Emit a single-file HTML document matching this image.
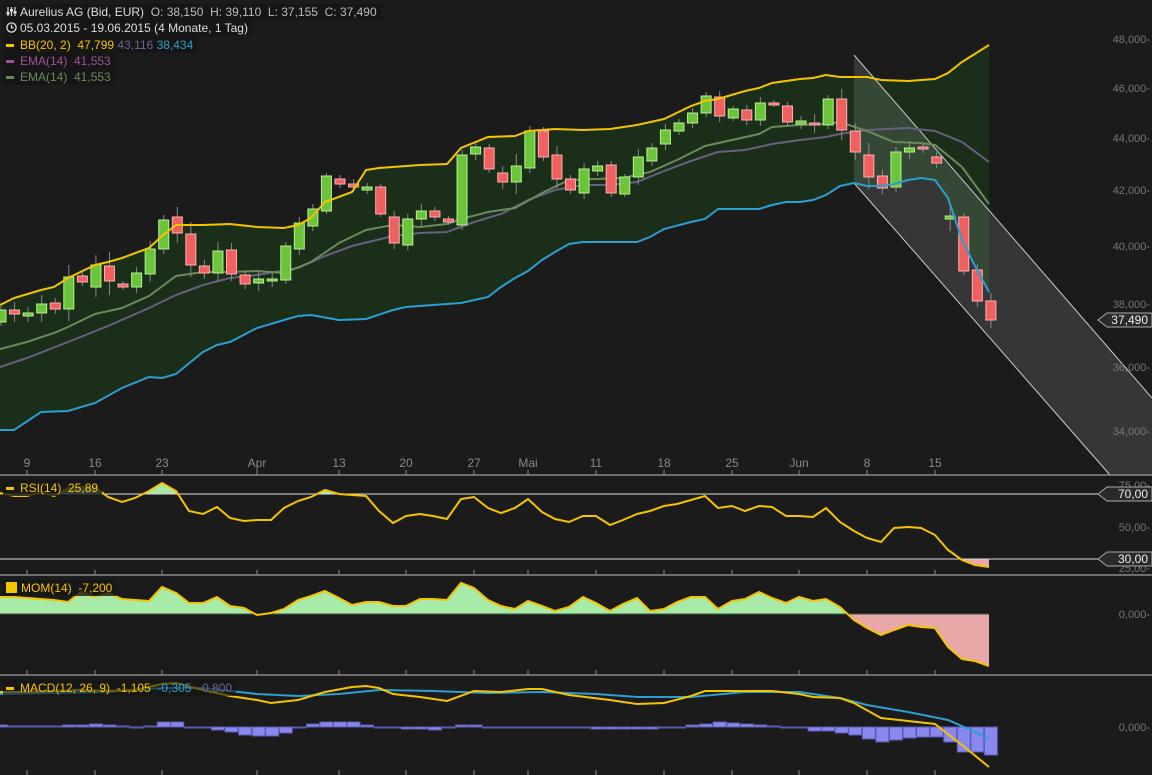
<!DOCTYPE html>
<html><head><meta charset="utf-8">
<style>
html,body{margin:0;padding:0;background:#1c1b1b;}
body{width:1152px;height:775px;overflow:hidden;position:relative;font-family:"Liberation Sans",sans-serif;}
svg{position:absolute;left:0;top:0;}
.lg{position:absolute;left:3px;font-size:12px;line-height:16px;height:16px;background:#161616;padding:0 4px 0 3px;white-space:nowrap;}
</style></head><body>
<svg id="s" width="1152" height="775" xmlns="http://www.w3.org/2000/svg"></svg>
<div class="lg" style="top:4px;color:#ddd"><span style="display:inline-block;width:14px">
<svg width="11" height="11" style="position:relative;top:1px;left:0"><path d="M2 1v9M5.5 1v9M9 1v9" stroke="#ddd" stroke-width="1.2"/><rect x="0.5" y="6" width="3" height="2.5" fill="#ddd"/><rect x="4" y="3" width="3" height="2.5" fill="#ddd"/><rect x="7.5" y="5" width="3" height="2.5" fill="#ddd"/></svg></span>Aurelius AG (Bid, EUR) &nbsp;<span style="color:#bbb">O: 38,150 &nbsp;H: 39,110 &nbsp;L: 37,155 &nbsp;C: 37,490</span></div>
<div class="lg" style="top:20px;color:#ddd"><span style="display:inline-block;width:14px"><svg width="11" height="11" style="position:relative;top:1px"><circle cx="5.5" cy="5.5" r="4.6" fill="none" stroke="#ddd" stroke-width="1.3"/><path d="M5.5 2.8v3h2.3" stroke="#ddd" stroke-width="1.2" fill="none"/></svg></span>05.03.2015 - 19.06.2015 (4 Monate, 1 Tag)</div>
<div class="lg" style="top:37px;color:#f5c400"><span style="display:inline-block;width:8px;height:3px;background:#f5c400;vertical-align:middle;margin-right:6px"></span>BB(20, 2) &nbsp;47,799 <span style="color:#6a6590">43,116</span> <span style="color:#2a9fd0">38,434</span></div>
<div class="lg" style="top:53px;color:#a0509a"><span style="display:inline-block;width:8px;height:3px;background:#a0509a;vertical-align:middle;margin-right:6px"></span>EMA(14) &nbsp;41,553</div>
<div class="lg" style="top:69px;color:#6b8a5a"><span style="display:inline-block;width:8px;height:3px;background:#6b8a5a;vertical-align:middle;margin-right:6px"></span>EMA(14) &nbsp;41,553</div>
<div class="lg" style="top:480px;color:#f5c400;background:rgba(22,22,22,0.8)"><span style="display:inline-block;width:8px;height:3px;background:#f5c400;vertical-align:middle;margin-right:6px"></span>RSI(14) &nbsp;25,89</div>
<div class="lg" style="top:580px;color:#f5c400;background:rgba(22,22,22,0.8)"><span style="display:inline-block;width:11px;height:11px;background:#f5c400;vertical-align:middle;margin-right:4px;margin-top:-2px"></span>MOM(14) &nbsp;-7,200</div>
<div class="lg" style="top:680px;color:#f5c400;background:rgba(22,22,22,0.6)"><span style="display:inline-block;width:8px;height:3px;background:#f5c400;vertical-align:middle;margin-right:6px"></span>MACD(12, 26, 9) &nbsp;-1,105 &nbsp;<span style="color:#2a9fd0">-0,305</span> &nbsp;<span style="color:#6a6590">-0,800</span></div>
<script>
var s=document.getElementById('s');var h='';
function P(a){return a.map(function(p){return p[0]+','+p[1]}).join(' ');}
var up=[[0,305],[14,298],[41,290],[54,287],[68,278],[95,265],[108,262],[122,258],[149,248],[162,236],[176,225],[203,225],[230,224],[257,227],[284,228],[298,225],[311,218],[325,202],[352,192],[366,170],[379,168],[406,166],[420,165],[447,164],[461,148],[488,137],[515,136],[528,131],[555,129],[583,130],[610,129],[637,125],[664,119],[691,106],[705,101],[718,99],[745,91],[759,88],[772,83],[800,79],[813,78],[826,75],[840,77],[867,77],[881,80],[908,81],[935,79],[948,73],[962,62],[989,45]];
var lo=[[0,430],[14,430],[41,412],[68,411],[95,403],[122,388],[149,377],[162,378],[176,374],[203,352],[217,345],[230,342],[257,328],[284,320],[298,316],[311,315],[339,320],[366,319],[393,310],[406,307],[433,305],[461,303],[488,297],[501,287],[515,278],[528,271],[542,260],[555,252],[569,244],[583,242],[610,242],[637,242],[650,237],[664,229],[691,222],[705,219],[718,209],[732,209],[759,209],[772,205],[786,202],[800,202],[813,200],[826,195],[840,186],[854,183],[867,186],[881,186],[894,184],[908,180],[921,178],[935,180],[948,198],[962,240],[975,266],[989,292]];
h+='<polygon points="'+P(up)+' '+P(lo.slice().reverse())+'" fill="#1a2e1a"/>';
h+='<polygon points="854,55 1152,398 1152,475 1110,475 854,183" fill="rgba(255,255,255,0.12)"/>';
h+='<line x1="854" y1="55" x2="1152" y2="398" stroke="#ccc" stroke-width="1"/><line x1="854" y1="183" x2="1110" y2="475" stroke="#ccc" stroke-width="1"/>';
var emaP=[[0,367],[27,358],[68,342],[108,326],[149,308],[176,295],[203,285],[230,278],[257,275],[298,268],[325,256],[352,246],[393,236],[420,233],[447,232],[474,222],[501,214],[528,200],[555,190],[583,185],[610,185],[637,182],[664,171],[691,161],[718,152],[745,150],[772,144],[800,140],[826,137],[840,134],[867,130],[908,128],[935,131],[962,142],[989,162]];
var emaG=[[0,349],[27,342],[54,333],[68,327],[95,314],[122,308],[149,296],[176,276],[203,272],[230,272],[257,271],[284,273],[311,262],[339,243],[366,230],[393,225],[420,227],[447,224],[461,219],[488,212],[515,208],[542,193],[569,180],[596,179],[623,178],[650,172],[677,160],[705,146],[732,140],[759,134],[772,127],[800,125],[826,124],[840,122],[867,131],[894,142],[921,143],[935,145],[962,167],[989,204]];
h+='<polyline points="'+P(emaP)+'" fill="none" stroke="#666080" stroke-width="2"/>';
h+='<polyline points="'+P(emaG)+'" fill="none" stroke="#6b8a5a" stroke-width="2"/>';
var c=[[310,322,1],[310,314,0],[313,316,1],[304,313,1],[303,309,0],[277,309,1],[276,282,0],[265,287,1],[266,281,0],[284,287,0],[273,287,1],[249,274,1],[220,249,1],[217,233,0],[234,265,0],[266,273,0],[251,273,1],[250,274,0],[275,284,0],[279,283,1],[279,281,1],[246,280,1],[223,249,1],[209,226,1],[176,211,1],[179,184,0],[184,187,0],[187,190,1],[187,214,0],[217,243,0],[219,245,1],[211,219,1],[211,217,0],[219,222,0],[155,225,1],[147,154,1],[148,169,0],[173,182,0],[166,182,1],[131,168,1],[131,157,0],[155,179,0],[179,190,0],[169,193,1],[166,171,1],[165,193,0],[177,194,1],[157,177,1],[148,161,1],[130,144,1],[123,131,1],[113,123,1],[96,113,1],[97,116,0],[109,118,1],[110,120,0],[103,120,1],[103,104,0],[106,122,0],[121,124,1],[123,124,0],[99,125,1],[99,130,0],[131,152,0],[155,177,0],[176,188,0],[152,187,1],[148,152,1],[147,149,0],[157,163,0],[216,219,1],[217,271,0],[270,301,0],[301,320,0]];
var wk=[4,8,6,9,5,12,4,10,14,3,6,8,5,10,12,6,9,7,5,8,6,4,6,5,3,4,5,4,3,6,5,7,4,3,5,6,4,7,12,5,4,9,4,6,5,4,3,8,5,6,4,5,4,6,3,5,6,3,4,5,9,4,10,8,12,6,5,7,4,5,12,4,6,8];
for(var i=0;i<c.length;i++){var x=1+i*13.56,a=c[i],w=wk[i];
h+='<line x1="'+x+'" y1="'+(a[0]-w)+'" x2="'+x+'" y2="'+(a[1]+w)+'" stroke="#888" stroke-width="1"/>';
h+='<rect x="'+(x-5)+'" y="'+a[0]+'" width="10" height="'+Math.max(2,a[1]-a[0])+'" fill="'+(a[2]?'#6cc43a':'#f06060')+'" stroke="'+(a[2]?'#b8f090':'#ffb0b0')+'" stroke-width="1"/>';}
h+='<polyline points="'+P(up)+'" fill="none" stroke="#f5c400" stroke-width="2"/>';
h+='<polyline points="'+P(lo)+'" fill="none" stroke="#2a9fd0" stroke-width="2"/>';
// axis labels
var yl=[[39,'48,000-'],[88,'46,000-'],[138,'44,000-'],[190,'42,000-'],[246,'40,000-'],[304,'38,000-'],[367,'36,000-'],[431,'34,000-']];
yl.forEach(function(l){h+='<text x="1150" y="'+(l[0]+4)+'" text-anchor="end" font-size="11" fill="#777" font-family="Liberation Sans">'+l[1]+'</text>';});
var xl=[[27,'9'],[95,'16'],[162,'23'],[257,'Apr'],[339,'13'],[406,'20'],[474,'27'],[528,'Mai'],[596,'11'],[664,'18'],[732,'25'],[799,'Jun'],[867,'8'],[935,'15']];
xl.forEach(function(l){h+='<text x="'+l[0]+'" y="467" text-anchor="middle" font-size="12" fill="#888" font-family="Liberation Sans">'+l[1]+'</text>';
[475,575,675].forEach(function(y){h+='<line x1="'+l[0]+'" y1="'+(y-5)+'" x2="'+l[0]+'" y2="'+(y)+'" stroke="#888"/>';});
h+='<line x1="'+l[0]+'" y1="770" x2="'+l[0]+'" y2="775" stroke="#888"/>';});
[475,575,675].forEach(function(y){h+='<line x1="0" y1="'+y+'" x2="1152" y2="'+y+'" stroke="#8a8a8a" stroke-width="1.5"/>';});
function tag(y,t){h+='<polygon points="1098,'+y+' 1107,'+(y-7)+' 1152,'+(y-7)+' 1152,'+(y+7)+' 1107,'+(y+7)+'" fill="#2a2a2a" stroke="#aaa"/><text x="1148" y="'+(y+4)+'" text-anchor="end" font-size="12" fill="#eee" font-family="Liberation Sans">'+t+'</text>';}
tag(320,'37,490');
// RSI
var rsi=[[0,493],[14,496],[27,496],[41,492],[54,496],[68,488],[81,487],[95,487],[108,497],[122,502],[135,498],[149,491],[162,483],[176,491],[189,511],[203,514],[217,507],[230,518],[244,521],[257,520],[271,520],[284,508],[298,501],[311,497],[325,490],[339,494],[352,495],[366,496],[379,511],[393,523],[406,516],[420,514],[433,516],[447,519],[461,499],[474,497],[488,508],[501,513],[515,508],[528,499],[542,512],[555,519],[569,522],[583,516],[596,516],[610,525],[623,520],[637,514],[650,511],[664,506],[677,504],[691,500],[705,496],[718,508],[732,506],[745,511],[759,506],[772,507],[786,516],[799,516],[813,517],[826,508],[840,522],[854,531],[867,538],[881,542],[894,528],[908,527],[921,528],[935,535],[948,550],[962,560],[975,565],[989,567]];
h+='<defs><clipPath id="ra"><rect x="0" y="476" width="1152" height="18"/></clipPath><clipPath id="rb"><rect x="0" y="559" width="1152" height="15"/></clipPath><clipPath id="ma"><rect x="0" y="576" width="1152" height="38"/></clipPath><clipPath id="mb"><rect x="0" y="614" width="1152" height="60"/></clipPath></defs>';
h+='<polygon clip-path="url(#ra)" points="0,494 '+P(rsi)+' 989,494" fill="#a8e8a8"/>';
h+='<polygon clip-path="url(#rb)" points="0,559 '+P(rsi)+' 989,559" fill="#e8a8a8"/>';
h+='<line x1="0" y1="494" x2="1105" y2="494" stroke="#ddd"/><line x1="0" y1="559" x2="1105" y2="559" stroke="#ddd"/>';
h+='<polyline points="'+P(rsi)+'" fill="none" stroke="#f5c400" stroke-width="2"/>';
h+='<text x="1150" y="489" text-anchor="end" font-size="11" fill="#777" font-family="Liberation Sans">75,00-</text>';
h+='<text x="1150" y="531" text-anchor="end" font-size="11" fill="#777" font-family="Liberation Sans">50,00-</text>';
h+='<text x="1150" y="572" text-anchor="end" font-size="11" fill="#777" font-family="Liberation Sans">25,00-</text>';
tag(494,'70,00');tag(559,'30,00');
// MOM
var mom=[[0,597],[14,597],[54,600],[68,602],[81,592],[95,597],[108,593],[122,599],[149,601],[162,587],[176,593],[189,603],[203,603],[217,597],[230,606],[244,608],[257,615],[271,613],[284,609],[298,600],[311,596],[325,591],[339,598],[352,605],[366,602],[379,602],[393,606],[406,606],[420,599],[433,599],[447,600],[461,583],[474,588],[488,600],[501,606],[515,609],[528,601],[542,606],[555,611],[569,607],[583,597],[596,603],[610,611],[623,604],[637,598],[650,611],[664,609],[677,602],[691,597],[705,597],[718,609],[732,601],[745,599],[759,592],[772,598],[786,603],[799,597],[813,601],[826,599],[840,607],[854,620],[867,628],[881,635],[894,630],[908,625],[921,627],[935,628],[948,647],[962,659],[975,661],[989,666]];
h+='<polygon clip-path="url(#ma)" points="0,614 '+P(mom)+' 989,614" fill="#a8eaa8"/>';
h+='<polygon clip-path="url(#mb)" points="0,614 '+P(mom)+' 989,614" fill="#e8a8a8"/>';
h+='<line x1="0" y1="614" x2="989" y2="614" stroke="#3a5a3a"/>';
h+='<polyline points="'+P(mom)+'" fill="none" stroke="#f5c400" stroke-width="2"/>';
h+='<text x="1150" y="618" text-anchor="end" font-size="11" fill="#777" font-family="Liberation Sans">0,000-</text>';
// MACD histogram
var hv=[-2,-1,-1,-1,-1,-2,-2,-3,-2,-1,0,-1,-5,-5,0,1,3,5,8,9,9,6,1,-3,-5,-5,-5,-2,0,1,2,2,3,1,-2,-2,0,0,1,0,0,0,0,1,2,2,2,2,2,1,0,-2,-3,-5,-4,-3,-2,-1,0,1,4,4,6,8,12,15,13,11,10,10,15,25,25,28];
for(var i=0;i<hv.length;i++){var x=1+i*13.56,v=hv[i];var y=v<0?727+v:727;h+='<rect x="'+(x-6.5)+'" y="'+y+'" width="13" height="'+Math.max(1,Math.abs(v))+'" fill="#8888ee" stroke="#5a5ab0" stroke-width="1"/>';}
var my=[[0,692],[27,692],[54,691],[81,690],[108,691],[135,690],[162,684],[176,683],[203,690],[230,696],[257,700],[271,703],[298,700],[325,692],[352,687],[366,686],[379,688],[393,694],[420,697],[447,701],[474,691],[501,692],[528,689],[542,689],[569,695],[610,700],[637,704],[664,703],[691,696],[705,691],[745,691],[772,691],[799,694],[813,697],[840,698],[854,703],[881,718],[908,721],[935,724],[962,745],[989,767]];
var mb=[[0,694],[54,693],[108,692],[162,688],[203,688],[257,694],[298,696],[339,694],[379,690],[433,691],[488,693],[542,692],[596,694],[637,697],[691,697],[745,692],[799,692],[840,698],[867,705],[908,712],[948,720],[989,738]];
h+='<polyline points="'+P(mb)+'" fill="none" stroke="#2a9fd0" stroke-width="2"/>';
h+='<polyline points="'+P(my)+'" fill="none" stroke="#f5c400" stroke-width="2"/>';
h+='<text x="1150" y="731" text-anchor="end" font-size="11" fill="#777" font-family="Liberation Sans">0,000-</text>';
s.innerHTML=h;
</script>
</body></html>
